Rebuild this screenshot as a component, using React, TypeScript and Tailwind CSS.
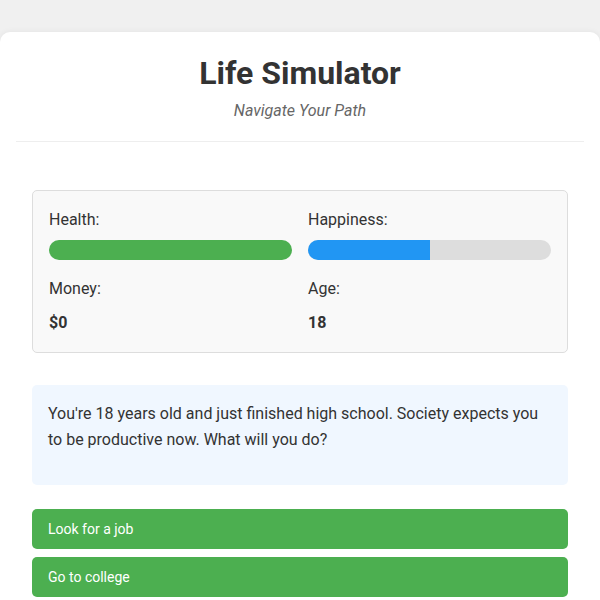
import React, { useState } from 'react';

interface Stats {
  health: number;
  happiness: number;
  money: number;
  age: number;
}

const StatBar: React.FC<{ value: number; color: string }> = ({ value, color }) => (
  <div className="h-5 w-full rounded-full bg-[#dddddd] overflow-hidden">
    <div className={`h-full ${color}`} style={{ width: `${value}%` }} />
  </div>
);

const App: React.FC = () => {
  const [stats] = useState<Stats>({ health: 100, happiness: 50, money: 0, age: 18 });

  const choices = ['Look for a job', 'Go to college'];

  return (
    <div className="min-h-screen bg-[#f0f0f0] pt-8 text-[16px] text-[#333333] leading-[1.6]" style={{ fontFamily: 'Roboto, "Liberation Sans", sans-serif' }}>
      <div className="bg-white rounded-[10px] shadow-[0_0_6px_rgba(0,0,0,0.06)] px-4 pt-[23px] pb-6">
        {/* Header */}
        <div className="text-center border-b border-[#eeeeee] pb-[17px]">
          <h1 className="text-[32px] font-bold leading-[37px] text-[#333333]">Life Simulator</h1>
          <p className="mt-[6px] italic text-[#666666]">Navigate Your Path</p>
        </div>

        <div className="px-4 pt-12">
          {/* Stats */}
          <div className="grid grid-cols-2 gap-x-4 gap-y-4 bg-[#f9f9f9] border border-[#dddddd] rounded-[5px] px-4 pt-4 pb-[17px]">
            <div>
              <div className="mb-2">Health:</div>
              <StatBar value={stats.health} color="bg-[#4caf50]" />
            </div>
            <div>
              <div className="mb-2">Happiness:</div>
              <StatBar value={stats.happiness} color="bg-[#2196f3]" />
            </div>
            <div>
              <div className="mb-2">Money:</div>
              <div className="font-bold">${stats.money}</div>
            </div>
            <div>
              <div className="mb-2">Age:</div>
              <div className="font-bold">{stats.age}</div>
            </div>
          </div>

          {/* Story */}
          <div className="mt-8 bg-[#f0f7ff] rounded-[5px] p-4 min-h-[100px]">
            You're 18 years old and just finished high school. Society expects you to be productive now. What will you do?
          </div>

          {/* Choices */}
          <div className="mt-6 flex flex-col gap-2">
            {choices.map(choice => (
              <button
                key={choice}
                className="w-full text-left bg-[#4caf50] text-white text-[14px] leading-5 px-4 py-[10px] rounded-[5px]"
              >
                {choice}
              </button>
            ))}
          </div>
        </div>
      </div>
    </div>
  );
};

export default App;
